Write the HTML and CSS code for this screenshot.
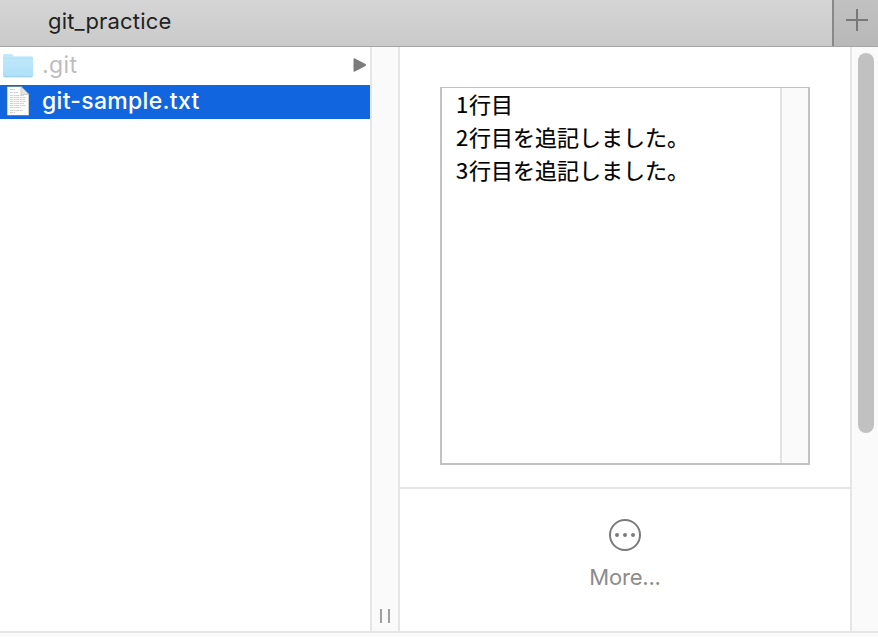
FILE: index.html
```html
<!DOCTYPE html>
<html lang="ja">
<head>
<meta charset="utf-8">
<title>git_practice</title>
<link rel="stylesheet" href="styles.css">
</head>
<body>
<div class="window">
  <header class="tabbar">
    <div class="tab"><span class="tab-title">git_practice</span></div>
    <div class="new-tab">
      <svg width="24" height="24" viewBox="0 0 24 24"><path d="M12 1v22M1 12h22" stroke="#787878" stroke-width="2"/></svg>
    </div>
  </header>
  <main class="browser">
    <div class="files">
      <div class="row folder">
        <svg class="icon" width="34" height="28" viewBox="0 0 34 28">
          <defs><linearGradient id="f" x1="0" y1="0" x2="0" y2="1"><stop offset="0" stop-color="#c3e9fa"/><stop offset="1" stop-color="#ade0f8"/></linearGradient></defs>
          <path d="M3 4.500q0-1.500 1.500-1.500h6.500q1.200 0 2 1l1 1.200h17.500q1.500 0 1.500 1.500v18q0 1.500-1.500 1.500h-27q-1.500 0-1.500-1.500z" fill="url(#f)"/>
          <path d="M3 7.500h30" stroke="#b2e0f5" stroke-width="1"/>
          <path d="M4 25.700h28" stroke="#9bcde5" stroke-width="1"/>
        </svg>
        <span class="name">.git</span>
        <svg class="arrow" width="14" height="16" viewBox="0 0 14 16"><path d="M1.500 2.300v11.400L12 8z" fill="#7c7c7c" stroke="#7c7c7c" stroke-width="2" stroke-linejoin="round"/></svg>
      </div>
      <div class="row selected">
        <svg class="icon" width="34" height="34" viewBox="0 0 34 34">
          <path d="M7 1.500h14l8 8v21h-22z" fill="#fcfcfa" stroke="#4d6680" stroke-width=".6"/>
          <path d="M21 1.500v8h8z" fill="#e4e5e3" stroke="#b5b9ba" stroke-width=".6"/>
          <path d="M10 4.500h5M10 7.500h8M10 10.500h14M10 12.500h16M10 14.500h15M10 16.500h16M10 18.500h14M10 20.500h16M10 22.500h11M10 25.500h13M10 27.500h5" stroke="#cbcbcb" stroke-width=".9" stroke-dasharray="3 .7 2 .5"/>
        </svg>
        <span class="name">git-sample.txt</span>
      </div>
    </div>
    <div class="divider"><span class="grip"></span></div>
    <section class="preview">
      <div class="preview-area">
        <div class="document">
          <div class="text"><p>1行目</p><p>2行目を追記しました。</p><p>3行目を追記しました。</p></div>
          <div class="text-track"></div>
        </div>
      </div>
      <div class="actions">
        <svg width="34" height="34" viewBox="0 0 34 34"><circle cx="17" cy="17" r="15" fill="none" stroke="#7b7b7b" stroke-width="2"/><g fill="#7b7b7b"><circle cx="9" cy="17" r="2"/><circle cx="17" cy="17" r="2"/><circle cx="25" cy="17" r="2"/></g></svg>
        <span class="more">More...</span>
      </div>
    </section>
    <div class="scroll-track"><div class="thumb"></div></div>
  </main>
  <footer class="bottom"></footer>
</div>
</body>
</html>
```
FILE: styles.css
```css
* { box-sizing: border-box; }
body { margin: 0; background: #fff; font-family: Inter, "Noto Sans CJK JP", sans-serif; }
p { margin: 0; }
svg { display: block; flex: none; }
.window { height: 637px; display: flex; flex-direction: column; overflow: hidden; }
.tabbar { height: 47px; display: flex; flex: none; border-bottom: 1px solid #a5a5a5; background: linear-gradient(#d5d5d5, #cacaca); }
.tab { flex: 1; padding-left: 48px; }
.tab-title { font-size: 22px; line-height: 42px; letter-spacing: .17px; color: #222; }
.new-tab { width: 46px; padding: 8px 0 0 11px; border-left: 2px solid #888; background: linear-gradient(#c1c1c1, #b8b8b8); }
.browser { flex: 1; display: flex; min-height: 0; }
.files { width: 370px; flex: none; }
.row { display: flex; align-items: center; white-space: nowrap; }
.name { flex: 1; margin-left: 8px; }
.folder { height: 38px; color: #bdbdbd; font-size: 23px; letter-spacing: .4px; }
.folder .icon { margin-top: -3px; }
.folder .name { margin-top: -3px; }
.arrow { margin: -3px 3px 0 0; }
.selected { height: 34px; background: #1166df; color: #fff; font-size: 23px; font-weight: 500; }
.selected .name { margin-top: -3px; letter-spacing: .3px; }
.divider { width: 30px; flex: none; display: flex; justify-content: center; align-items: flex-end; padding-bottom: 8px; background: #fafafa; border: solid #e5e5e5; border-width: 0 2px; }
.grip { width: 10px; height: 14px; border: solid #a0a0a0; border-width: 0 2px; }
.preview { width: 450px; flex: none; display: flex; flex-direction: column; }
.preview-area { height: 442px; padding: 40px 40px 0; border-bottom: 2px solid #e5e5e5; }
.document { width: 370px; height: 378px; display: flex; border: solid #c2c2c2; border-width: 1px 2px 2px; }
.text { flex: 1; margin-top: -1px; padding-left: 14px; font: 400 22px/33px "Noto Sans CJK JP", sans-serif; color: #000; -webkit-text-stroke: .2px #000; }
.text p::first-letter { letter-spacing: .8px; }
.text-track { width: 28px; border-left: 2px solid #e2e2e2; background: #fafafa; }
.actions { flex: 1; display: flex; flex-direction: column; align-items: center; padding-top: 29px; }
.more { margin-top: 8px; font-size: 22px; line-height: 34px; letter-spacing: -.2px; color: #8c8c8c; }
.scroll-track { flex: 1; padding: 6px 4px 0 6px; border-left: 2px solid #e5e5e5; background: #fafafa; }
.thumb { height: 380px; border-radius: 8px; background: #c1c1c1; }
.bottom { height: 6px; flex: none; border-top: 2px solid #e5e5e5; background: #fafafa; }
```
